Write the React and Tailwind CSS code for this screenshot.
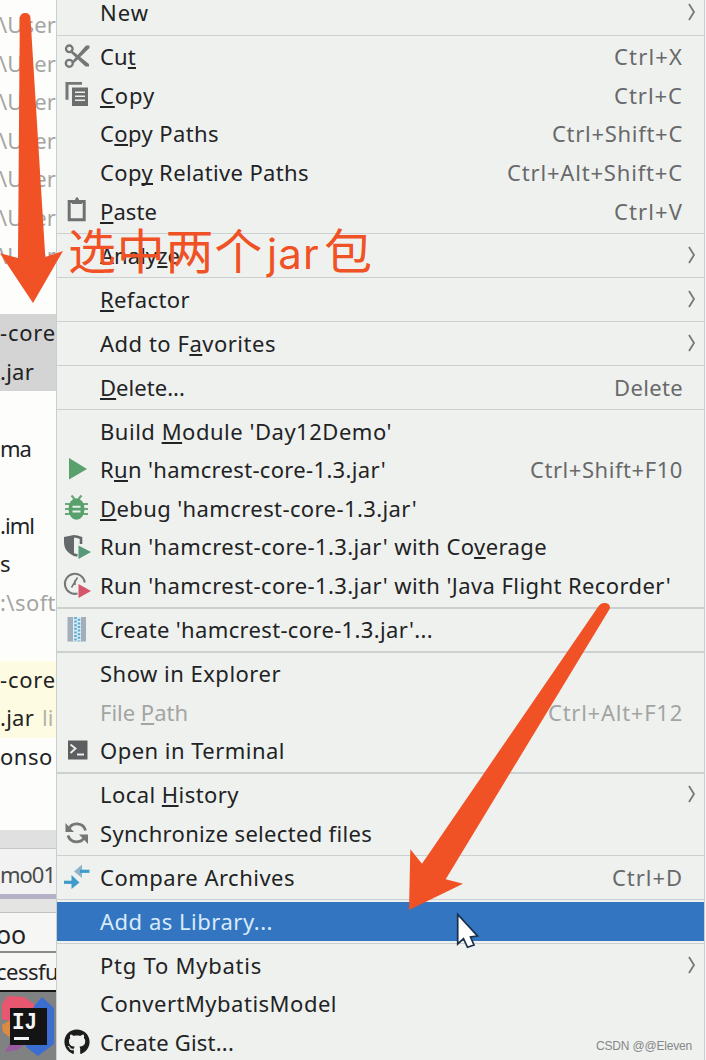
import React, { useLayoutEffect, useRef } from "react";
import { FaGithub } from "react-icons/fa";

// text that is tracked in or out until it fills the given width
const FitText = ({ width, className = "", children }) => {
  const ref = useRef(null);

  useLayoutEffect(() => {
    const el = ref.current;
    el.style.letterSpacing = "0px";
    const natural = el.getBoundingClientRect().width;
    const count = el.textContent.length;
    el.style.letterSpacing = `${(width - natural) / count}px`;
  }, [width]);

  return (
    <span ref={ref} className={`inline-block shrink-0 whitespace-pre ${className}`}>
      {children}
    </span>
  );
};

const Icon = ({ children }) => (
  <svg viewBox="0 0 26 26" className="size-[26px] overflow-visible" fill="none">
    {children}
  </svg>
);

const icons = {
  cut: (
    <Icon>
      <g stroke="#757777" strokeWidth="2.3">
        <circle cx="5.3" cy="4.8" r="3.3" />
        <circle cx="5.3" cy="19.3" r="3.5" />
      </g>
      <path d="M8 6.5 25 20v2.5h-3.5L7 9zM8 17.5 22 1.5h3.5V4L10 19z" fill="#757777" />
    </Icon>
  ),
  copy: (
    <Icon>
      <path d="M1.5 -1h16.5v2.8H4.5v15H1.5z" fill="#757777" />
      <path d="M8 4.5h16v18.5H8z" fill="#6c6e6e" />
      <path d="M11 9.3h10M11 13.3h10M11 17.3h10" stroke="#eceded" strokeWidth="1.6" />
    </Icon>
  ),
  paste: (
    <Icon>
      <path d="M5.2 2.4h15v18.4H5.2z" stroke="#6f7171" strokeWidth="3" />
      <path d="M8 1h3l1-2.5h2l1 2.5H18v4H8z" fill="#6f7171" />
    </Icon>
  ),
  run: (
    <Icon>
      <path d="M5 1 23 12 5 22.5z" fill="#58a06c" />
    </Icon>
  ),
  debug: (
    <Icon>
      <path d="m7.5 -.5 3 3.5M17.5 -.5l-3 3.5M1 8h23M1 13h23M1 18h23" stroke="#6aa87a" strokeWidth="2.2" />
      <ellipse cx="12.5" cy="13" rx="8" ry="10.8" fill="#58a06c" />
      <path d="M8.5 10.8h8M8.5 15.5h8" stroke="#e8f0e9" strokeWidth="2" />
    </Icon>
  ),
  coverage: (
    <Icon>
      <path d="M0 3 10 1v21C3.5 19 0 15 0 8z" fill="#66696b" />
      <path d="M9.5 2.3c3 .2 5.2.8 7.5 1.7v6M9.500 20.500l4 1" stroke="#66696b" strokeWidth="2.6" />
      <path d="M14.5 11.5 27 18l-12.5 7z" fill="#58987a" />
    </Icon>
  ),
  recorder: (
    <Icon>
      <path d="M13.5 20.5A10 10 0 1 1 20.8 9.500" stroke="#757777" strokeWidth="2" />
      <path d="M7.5 14.500 13.5 4.5M11 12V7" stroke="#757777" strokeWidth="1.6" />
      <path d="M14.5 11 27 18 14.5 25z" fill="#d4566b" />
    </Icon>
  ),
  archive: (
    <Icon>
      <path d="M3.5 0h18.5v24.500H3.5z" fill="#a2aeba" />
      <path d="M9 0h8v24.500H9z" fill="#d9edf7" />
      <path d="M11.5 0v24.500" stroke="#5fa6d1" strokeWidth="2.5" strokeDasharray="2 1.600" />
      <path d="M15 1.800v22.500" stroke="#5fa6d1" strokeWidth="2.5" strokeDasharray="2 1.600" />
    </Icon>
  ),
  terminal: (
    <Icon>
      <path d="M4 2.5h19.5V21.500H4z" fill="#5c5e60" />
      <path d="m6.5 6.500 5 4-5 4.500M13 16.500h7" stroke="#eceded" strokeWidth="1.9" />
    </Icon>
  ),
  sync: (
    <Icon>
      <path d="M4.5 8.500A9 9 0 0 1 21.5 9.500M21 15A9 9 0 0 1 4 14.500" stroke="#757777" strokeWidth="2.8" />
      <path d="M1.5 2v9H10zM24 23V13.500h-9z" fill="#757777" />
    </Icon>
  ),
  compare: (
    <Icon>
      <path d="M18 -.5v13.500L10 6.500z" fill="#8fb4c9" />
      <path d="M16 4.700h9.500v3.200H16z" fill="#3f9cca" />
      <path d="M7.5 10v14L15.5 17.500z" fill="#3f9cca" />
      <path d="M0 15.700h9v3.200H0z" fill="#3f9cca" />
    </Icon>
  ),
  github: <FaGithub className="-mt-px size-[26px] text-[#1c1c1c]" />,
};

// "_" goes in front of the mnemonic letter
const menu = [
  { text: "New", width: 49, sub: true },
  null,
  { text: "Cu_t", width: 36, keys: "Ctrl+X", keysWidth: 69, icon: "cut" },
  { text: "_Copy", width: 55, keys: "Ctrl+C", keysWidth: 69, icon: "copy" },
  { text: "C_opy Paths", width: 119, keys: "Ctrl+Shift+C", keysWidth: 131 },
  { text: "Cop_y Relative Paths", width: 209, keys: "Ctrl+Alt+Shift+C", keysWidth: 176 },
  { text: "_Paste", width: 57, keys: "Ctrl+V", keysWidth: 69, icon: "paste" },
  null,
  { text: "Analy_ze", width: 80, sub: true },
  null,
  { text: "_Refactor", width: 90, sub: true },
  null,
  { text: "Add to F_avorites", width: 176, sub: true },
  null,
  { text: "_Delete...", width: 85, keys: "Delete", keysWidth: 69 },
  null,
  { text: "Build _Module 'Day12Demo'", width: 292 },
  { text: "R_un 'hamcrest-core-1.3.jar'", width: 286, keys: "Ctrl+Shift+F10", keysWidth: 153, icon: "run" },
  { text: "_Debug 'hamcrest-core-1.3.jar'", width: 317, icon: "debug" },
  { text: "Run 'hamcrest-core-1.3.jar' with Co_verage", width: 447, icon: "coverage" },
  { text: "Run 'hamcrest-core-1.3.jar' with 'Java Flight Recorder'", width: 571, icon: "recorder" },
  null,
  { text: "Create 'hamcrest-core-1.3.jar'...", width: 333, icon: "archive" },
  null,
  { text: "Show in Explorer", width: 181 },
  { text: "File _Path", width: 88, keys: "Ctrl+Alt+F12", keysWidth: 135, disabled: true },
  { text: "Open in Terminal", width: 185, icon: "terminal" },
  null,
  { text: "Local _History", width: 139, sub: true },
  { text: "Synchronize selected files", width: 272, icon: "sync" },
  null,
  { text: "Compare Archives", width: 195, keys: "Ctrl+D", keysWidth: 71, icon: "compare" },
  null,
  { text: "Add as Library...", width: 173, active: true },
  null,
  { text: "Ptg To Mybatis", width: 162, sub: true },
  { text: "ConvertMybatisModel", width: 237 },
  { text: "Create Gist...", width: 134, icon: "github" },
];

const Label = ({ text }) => {
  const at = text.indexOf("_");
  if (at < 0) return text;
  return (
    <>
      {text.slice(0, at)}
      <span className="underline decoration-2 underline-offset-2 [text-decoration-skip-ink:none]">
        {text[at + 1]}
      </span>
      {text.slice(at + 2)}
    </>
  );
};

const rowColor = (item) => {
  if (item.active) return "bg-[#3375c1] text-[#d8ebfb]";
  if (item.disabled) return "text-[#a3a4a3]";
  return "text-[#222324]";
};

const MenuRow = ({ item }) => (
  <div className={`flex h-[38.6px] shrink-0 items-center pl-[7px] ${rowColor(item)}`}>
    <div className="mr-[10px] size-[26px] shrink-0">{icons[item.icon]}</div>
    <FitText width={item.width} className="pb-0.5">
      <Label text={item.text} />
    </FitText>
    <div className="flex-1" />
    {item.keys && (
      <FitText
        width={item.keysWidth}
        className={item.disabled ? "mr-[21px] pb-0.5 text-[#a3a4a3]" : "mr-[21px] pb-0.5 text-[#68696a]"}
      >
        {item.keys}
      </FitText>
    )}
    {item.sub && (
      <svg viewBox="0 0 8 18" className="mr-[8px] mb-0.5 h-[18px] w-[8px]" fill="none">
        <path d="M1 1 6 9 1 17" stroke="#777979" strokeWidth="1.8" />
      </svg>
    )}
  </div>
);

const treeRows = [
  ...Array(7).fill({ text: "\\User", width: 57, className: "text-[#a5a5a3]" }),
  {},
  { text: "-core", width: 56, className: "bg-[#d3d4d3]" },
  { text: ".jar", width: 34, className: "bg-[#d3d4d3]" },
  {},
  { text: "ma", width: 31 },
  {},
  { text: ".iml", width: 34 },
  { text: "s", width: 11 },
  { text: ":\\soft", width: 56, className: "text-[#a5a5a3]" },
  {},
  { text: "-core", width: 56, className: "bg-[#fdfbe1]" },
  { text: ".jar", width: 34, className: "bg-[#fdfbe1]", hint: "li" },
  { text: "onso", width: 53 },
];

const ProjectPane = () => (
  <div className="flex w-14 shrink-0 flex-col overflow-hidden bg-[#fdfefc] pt-[6px] text-[#222324]">
    {treeRows.map((row, index) => (
      <div
        key={index}
        className={`flex h-[38.5px] shrink-0 items-center whitespace-pre ${row.className || ""}`}
      >
        {row.text && (
          <FitText width={row.width} className={index < 7 ? "-ml-px pb-0.5" : "pb-0.5"}>
            {row.text}
          </FitText>
        )}
        {row.hint && <span className="ml-2 pb-0.5 text-[#b3b3a8]">{row.hint}</span>}
      </div>
    ))}

    {/* bottom tool windows */}
    <div className="mt-[54px] h-[18px] shrink-0 bg-[#dfe0df]" />
    <div className="flex h-[46px] shrink-0 items-center border-t border-[#c5c6c5] bg-[#f1f2f1] pt-1 text-[#4a4b4c]">
      <FitText width={55}>mo01</FitText>
    </div>
    <div className="h-[5px] shrink-0 bg-[#b3b1c5]" />
    <div className="h-[14px] shrink-0 border-b border-[#bfc0bf] bg-[#e4e5e3]" />
    <div className="flex h-[40px] shrink-0 items-center border-b-2 border-[#8b8c8c] bg-[#f6f6f5] pt-1">
      <FitText width={30} className="-ml-[4px] text-[25px]">oo</FitText>
    </div>
    <div className="flex h-[39px] shrink-0 items-center border-b-2 border-[#161616] bg-[#f6f6f5]">
      <FitText width={62} className="-ml-[4px] pb-0.5">cessfu</FitText>
    </div>

    {/* taskbar with the IDE icon */}
    <div className="h-[69px] shrink-0 bg-[#808282]">
      <svg viewBox="0 0 56 69" className="h-[69px] w-14">
        <path d="M2 12 8 4l16 1 14 10-8 20-28-8z" fill="#e9566f" />
        <path d="M34 14 42 5l12 11v36L38 64 26 55z" fill="#3b6ed0" />
        <path d="M2 33 12 27v20L3 40z" fill="#dc8a42" />
        <path d="M5 60 13 46l12 6-8 6z" fill="#9a5aa0" />
        <path d="M10 16h37v37H10z" fill="#141414" />
        <path d="M14 45h15v3H14z" fill="#f2f2f2" />
        <text
          x="12"
          y="37"
          fill="#f5f5f5"
          fontSize="24"
          fontWeight="700"
          fontFamily="Liberation Mono, monospace"
          textLength="25"
          lengthAdjust="spacingAndGlyphs"
        >
          IJ
        </text>
      </svg>
    </div>
  </div>
);

const Annotations = () => (
  <>
    <svg viewBox="0 0 706 1060" className="absolute inset-0 h-[1060px] w-[706px]">
      <g fill="#f05125">
        <path d="M19.8 18.5Q20 13 25.2 13T30.5 18.5L45.3 257 63 251 33 303 0 253.3 18 258z" />
        <path d="M598.3 606.5C602 600.5 612 603 609.6 609L445.7 879.3 463 883.7 409 910 410.3 849.3 422 863.7z" />
      </g>
      <path
        d="M457.7 914.5V944L463.5 938.7 467.5 947.3 474 945 470.5 937 477.5 936z"
        fill="#fff"
        stroke="#1b2f48"
        strokeWidth="1.7"
      />
    </svg>
    <div className="absolute left-[68px] top-[213px] flex h-[70px] items-baseline whitespace-pre font-['Noto_Sans_CJK_SC',sans-serif] text-[48px] leading-[70px] text-[#f05125]">
      <FitText width={195}>选中两个</FitText>
      <FitText width={53} className="ml-[4px] font-['Inter',sans-serif] text-[42px]">jar</FitText>
      <span className="ml-[4px]">包</span>
    </div>
    <div className="absolute bottom-[5px] right-[14px] font-['Liberation_Sans',sans-serif] text-[12px] leading-[18px] text-[#868787]">
      <FitText width={96}>CSDN @@Eleven</FitText>
    </div>
  </>
);

export default function App() {
  return (
    <div className="relative flex h-[1060px] w-[706px] overflow-hidden bg-[#f4f5f4] font-['Noto_Sans',sans-serif] text-[22px] leading-[30px]">
      <ProjectPane />
      <div className="flex w-[649px] shrink-0 flex-col border-x border-[#c9cdd0] bg-[#eff1ef]">
        <div className="-mt-[6px] flex flex-col">
          {menu.map((item, index) =>
            item ? (
              <MenuRow key={index} item={item} />
            ) : (
              <div key={index} className="h-[5.4px] shrink-0 pt-[2px]">
                <div className="h-[1.5px] bg-[#cdd0d0]" />
              </div>
            )
          )}
        </div>
      </div>
      <Annotations />
    </div>
  );
}
